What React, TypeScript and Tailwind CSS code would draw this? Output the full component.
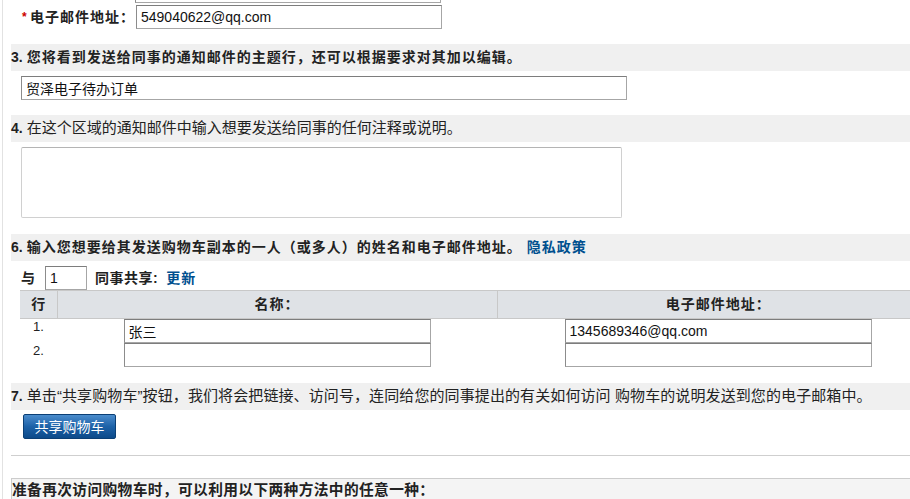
import React from 'react';

const field =
  "h-[24px] border border-[#a6a6a6] border-t-[#7d7d7d] border-l-[#8c8c8c] bg-white px-[4px] text-[14px] text-[#111] outline-none";

function SectionBar({ num, children, className = "" }: { num: string; children: React.ReactNode; className?: string }) {
  return (
    <div className={"flex items-center h-[27px] bg-[#f0f0f0] text-[#222] whitespace-nowrap " + className}>
      <span className="font-bold text-[14px] tracking-normal font-['Liberation_Sans',sans-serif]">{num}.</span>
      <span className="ml-[4px]">{children}</span>
    </div>
  );
}

export default function App() {
  return (
    <div className="w-[910px] h-[499px] overflow-hidden bg-white font-['Liberation_Sans','Noto_Sans_CJK_SC',sans-serif] text-[#222]">
      <div className="ml-[2px] border-l border-[#e2e2e2] pl-[8px] w-[960px] min-h-[520px]">
        {/* name row, scrolled mostly out of view */}
        <div className="-mt-[21px] h-[24px] flex">
          <input readOnly value="jiang" className={field + " ml-[124px] w-[306px]"} />
        </div>

        <div className="mt-[2px] h-[24px] flex items-center">
          <span className="ml-[11px] w-[8px] text-[12px] text-[#cc0000] font-bold">*</span>
          <span className="text-[14px] font-bold tracking-[1px] text-[#222]">电子邮件地址：</span>
          <input readOnly value="549040622@qq.com" className={field + " ml-[1px] w-[306px]"} />
        </div>

        <SectionBar num="3" className="mt-[15px] font-bold text-[14px] tracking-[1px]">
          您将看到发送给同事的通知邮件的主题行，还可以根据要求对其加以编辑。
        </SectionBar>
        <input readOnly value="贸泽电子待办订单" className={field + " mt-[5px] ml-[10px] w-[606px] block"} />

        <SectionBar num="4" className="mt-[15px] text-[15px]">
          在这个区域的通知邮件中输入想要发送给同事的任何注释或说明。
        </SectionBar>
        <textarea
          readOnly
          className="block mt-[5px] ml-[10px] w-[601px] h-[71px] border border-[#d0d0d0] border-t-[#b4b4b4] rounded-[2px] resize-none outline-none"
        />

        <SectionBar num="6" className="mt-[16px] font-bold text-[14px] tracking-[1px]">
          输入您想要给其发送购物车副本的一人（或多人）的姓名和电子邮件地址。
          <a href="#" className="ml-[5px] text-[#00508f]">隐私政策</a>
        </SectionBar>

        <div className="mt-[5px] h-[24px] flex items-center text-[14px] font-bold">
          <span className="ml-[10px]">与</span>
          <input readOnly value="1" className={field + " ml-[10px] w-[42px] text-[13px] font-normal"} />
          <span className="ml-[8px] tracking-[0.5px]">同事共享:</span>
          <a href="#" className="ml-[8px] tracking-[1px] text-[#00508f]">更新</a>
        </div>

        <table className="ml-[9px] table-fixed border-collapse w-[919px]">
          <colgroup>
            <col className="w-[37px]" />
            <col className="w-[440px]" />
            <col className="w-[442px]" />
          </colgroup>
          <thead>
            <tr className="h-[28px] bg-[#dfe2e6] text-[14px] font-bold">
              <th className="border-y border-[#c8c8c8] text-center">行</th>
              <th className="border-y border-l border-[#c8c8c8] text-center tracking-[1px]">名称：</th>
              <th className="border-y border-l border-[#c8c8c8] text-center tracking-[1px]">电子邮件地址：</th>
            </tr>
          </thead>
          <tbody>
            {[
              { n: 1, name: "张三", email: "1345689346@qq.com" },
              { n: 2, name: "", email: "" },
            ].map((r) => (
              <tr key={r.n} className="h-[24px]">
                <td className="align-top text-center text-[13px] p-0 leading-[16px]">{r.n}.</td>
                <td className="p-0">
                  <input readOnly value={r.name} className={field + " block mx-auto w-[307px]"} />
                </td>
                <td className="p-0">
                  <input
                    readOnly
                    value={r.email}
                    className={field + " block mx-auto w-[307px] " + (r.email ? "bg-[#f0f0f0]" : "")}
                  />
                </td>
              </tr>
            ))}
          </tbody>
        </table>

        <SectionBar num="7" className="mt-[16px] text-[15px] tracking-[0.1px]">
          单击“共享购物车”按钮，我们将会把链接、访问号，连同给您的同事提出的有关如何访问 购物车的说明发送到您的电子邮箱中。
        </SectionBar>

        <button className="block mt-[4px] ml-[12px] w-[93px] h-[25px] rounded-[2px] border border-[#0b3f75] bg-gradient-to-b from-[#4a8ccc] via-[#1d62a8] to-[#0c4a8a] text-white text-[14px] leading-none">
          共享购物车
        </button>

        <div className="mt-[16px] border-t border-[#cfcfcf]" />

        <div className="mt-[22px] h-[30px] bg-[#f4f4f4] border-t border-l border-[#cccccc] pt-[2px] text-[14.7px] tracking-[0.4px] leading-[18px] font-bold whitespace-nowrap">
          准备再次访问购物车时，可以利用以下两种方法中的任意一种：
        </div>
      </div>
    </div>
  );
}
